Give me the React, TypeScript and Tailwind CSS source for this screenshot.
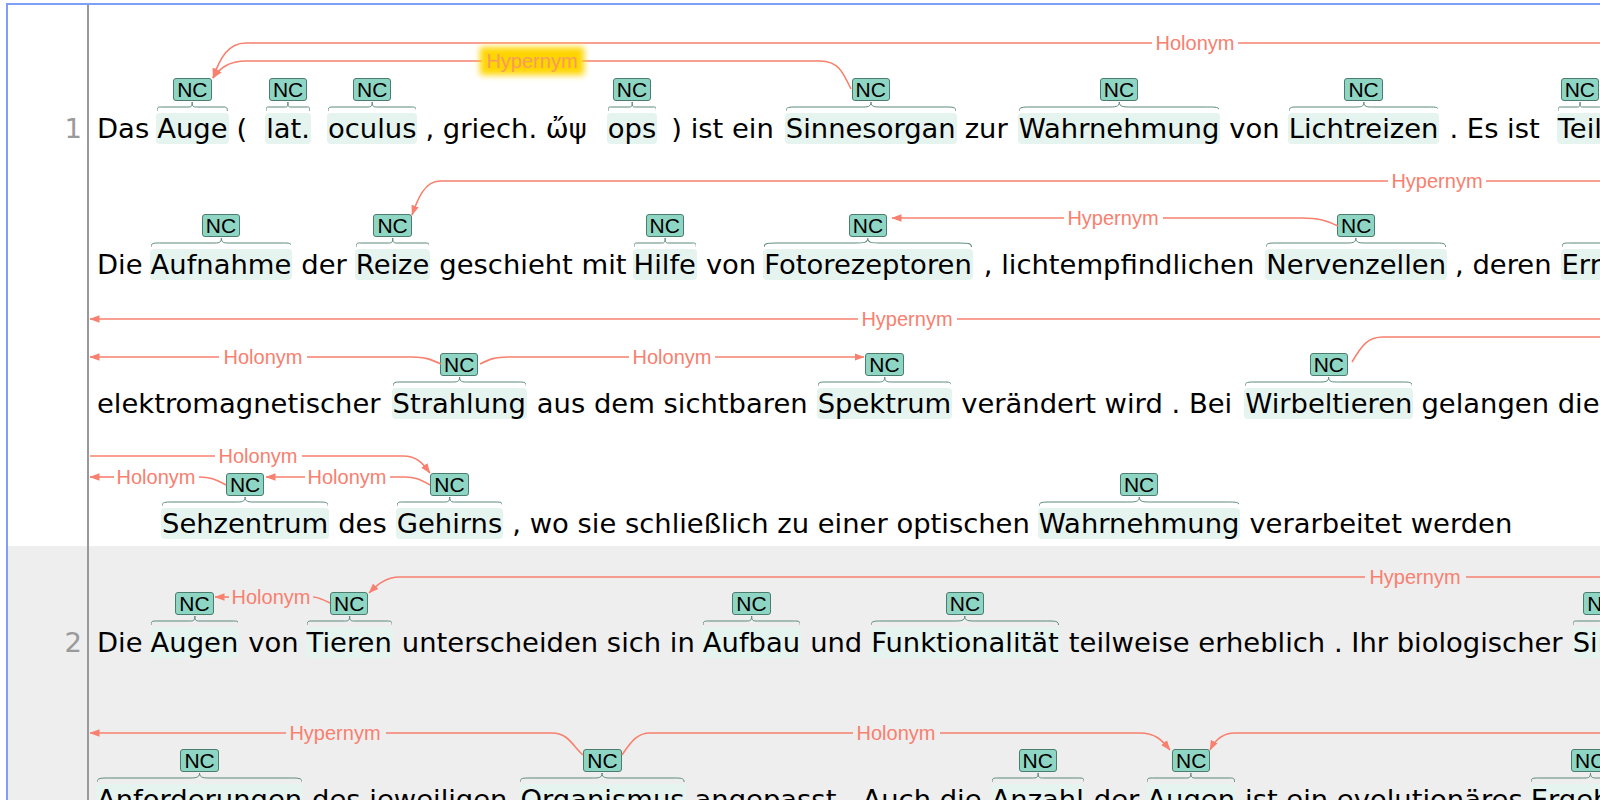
import React from "react";

type Seg = { t: string; nc?: boolean; ml?: string };
type Row = { h: string; num?: string; segs: Seg[] };
type Sentence = { bg: string; rows: Row[] };

const ARC = "#f8806f";

const sentences: Sentence[] = [
  {
    bg: "bg-white",
    rows: [
      {
        h: "h-[146px]",
        num: "1",
        segs: [
          { t: "Das" },
          { t: "Auge", nc: true, ml: "ml-[8px]" },
          { t: "(", ml: "ml-[9px]" },
          { t: "lat.", nc: true, ml: "ml-[19px]" },
          { t: "oculus", nc: true, ml: "ml-[18px]" },
          { t: ", griech. ὤψ", ml: "ml-[9px]" },
          { t: "ops", nc: true, ml: "ml-[21px]" },
          { t: ") ist ein", ml: "ml-[15px]" },
          { t: "Sinnesorgan", nc: true, ml: "ml-[12px]" },
          { t: "zur", ml: "ml-[9px]" },
          { t: "Wahrnehmung", nc: true, ml: "ml-[11px]" },
          { t: "von", ml: "ml-[10px]" },
          { t: "Lichtreizen", nc: true, ml: "ml-[9px]" },
          { t: ". Es ist", ml: "ml-[11px]" },
          { t: "Teil", nc: true, ml: "ml-[18px]" },
          { t: "des visuellen Systems", ml: "ml-[9px]" },
        ],
      },
      {
        h: "h-[136px]",
        segs: [
          { t: "Die" },
          { t: "Aufnahme", nc: true, ml: "ml-[8px]" },
          { t: "der", ml: "ml-[10px]" },
          { t: "Reize", nc: true, ml: "ml-[9px]" },
          { t: "geschieht mit", ml: "ml-[10px]" },
          { t: "Hilfe", nc: true, ml: "ml-[7px]" },
          { t: "von", ml: "ml-[10px]" },
          { t: "Fotorezeptoren", nc: true, ml: "ml-[8px]" },
          { t: ", lichtempfindlichen", ml: "ml-[12px]" },
          { t: "Nervenzellen", nc: true, ml: "ml-[12px]" },
          { t: ", deren", ml: "ml-[9px]" },
          { t: "Erregung", nc: true, ml: "ml-[10px]" },
          { t: "durch", ml: "ml-[9px]" },
        ],
      },
      {
        h: "h-[139px]",
        segs: [
          { t: "elektromagnetischer" },
          { t: "Strahlung", nc: true, ml: "ml-[12px]" },
          { t: "aus dem sichtbaren", ml: "ml-[11px]" },
          { t: "Spektrum", nc: true, ml: "ml-[10px]" },
          { t: "verändert wird . Bei", ml: "ml-[10px]" },
          { t: "Wirbeltieren", nc: true, ml: "ml-[13px]" },
          { t: "gelangen die Reize", ml: "ml-[9px]" },
        ],
      },
      {
        h: "h-[120px]",
        segs: [
          { t: "Sehzentrum", nc: true, ml: "ml-[65px]" },
          { t: "des", ml: "ml-[10px]" },
          { t: "Gehirns", nc: true, ml: "ml-[10px]" },
          { t: ", wo sie schließlich zu einer optischen", ml: "ml-[10px]" },
          { t: "Wahrnehmung", nc: true, ml: "ml-[9px]" },
          { t: "verarbeitet werden", ml: "ml-[10px]" },
        ],
      },
    ],
  },
  {
    bg: "bg-[#eeeeee]",
    rows: [
      {
        h: "h-[119px]",
        num: "2",
        segs: [
          { t: "Die" },
          { t: "Augen", nc: true, ml: "ml-[8px]" },
          { t: "von", ml: "ml-[10px]" },
          { t: "Tieren", nc: true, ml: "ml-[8px]" },
          { t: "unterscheiden sich in", ml: "ml-[10px]" },
          { t: "Aufbau", nc: true, ml: "ml-[8px]" },
          { t: "und", ml: "ml-[10px]" },
          { t: "Funktionalität", nc: true, ml: "ml-[9px]" },
          { t: "teilweise erheblich . Ihr biologischer", ml: "ml-[10px]" },
          { t: "Sinn", nc: true, ml: "ml-[10px]" },
        ],
      },
      {
        h: "h-[157px]",
        segs: [
          { t: "Anforderungen", nc: true },
          { t: "des jeweiligen", ml: "ml-[10px]" },
          { t: "Organismus", nc: true, ml: "ml-[13px]" },
          { t: "angepasst . Auch die", ml: "ml-[10px]" },
          { t: "Anzahl", nc: true, ml: "ml-[10px]" },
          { t: "der", ml: "ml-[10px]" },
          { t: "Augen", nc: true, ml: "ml-[8px]" },
          { t: "ist ein evolutionäres", ml: "ml-[10px]" },
          { t: "Ergebnis", nc: true, ml: "ml-[8px]" },
        ],
      },
    ],
  },
];

// arcs: line pieces (arrow = marker at end) and labels, page coordinates
type Piece = { d: string; arrow?: boolean };
type Label = { x: number; y: number; text: string; glow?: boolean };

const pieces: Piece[] = [
  // line 1
  { d: "M 1600 43 L 1238 43" },
  { d: "M 1152 43 L 246 43 C 228 43 220 58 213 78", arrow: true },
  { d: "M 851 89 C 843 72 838 61 820 61 L 582 61" },
  { d: "M 482 61 L 246 61 C 229 61 220 68 213 78", arrow: true },
  // line 2
  { d: "M 1600 181 L 1486 181" },
  { d: "M 1388 181 L 440 181 C 425 181 418 198 412 215", arrow: true },
  { d: "M 1338 226 C 1325 220 1318 218 1302 218 L 1163 218" },
  { d: "M 1064 218 L 892 218", arrow: true },
  // line 3
  { d: "M 1600 319 L 957 319" },
  { d: "M 858 319 L 90 319", arrow: true },
  { d: "M 441 364 C 430 359 425 357 412 357 L 307 357" },
  { d: "M 219 357 L 90 357", arrow: true },
  { d: "M 480 364 C 490 359 495 357 508 357 L 629 357" },
  { d: "M 715 357 L 864 357", arrow: true },
  { d: "M 1352 362 C 1362 345 1368 337 1383 337 L 1600 337" },
  // line 4
  { d: "M 90 456 L 215 456" },
  { d: "M 302 456 L 403 456 C 418 456 424 465 430 473", arrow: true },
  { d: "M 226 485 C 215 479 210 477 199 477" },
  { d: "M 114 477 L 90 477", arrow: true },
  { d: "M 430 485 C 420 479 414 477 405 477 L 390 477" },
  { d: "M 305 477 L 266 477", arrow: true },
  // line 5
  { d: "M 1600 577 L 1466 577" },
  { d: "M 1365 577 L 400 577 C 385 577 376 586 369 593", arrow: true },
  { d: "M 330 603 C 322 599 318 597 313 597" },
  { d: "M 229 597 L 215 597", arrow: true },
  // line 6
  { d: "M 583 755 C 572 745 568 733 552 733 L 386 733" },
  { d: "M 286 733 L 90 733", arrow: true },
  { d: "M 622 755 C 632 740 638 733 650 733 L 853 733" },
  { d: "M 940 733 L 1140 733 C 1155 733 1162 740 1170 750", arrow: true },
  { d: "M 1600 733 L 1235 733 C 1222 733 1215 740 1210 750", arrow: true },
];

const labels: Label[] = [
  { x: 1195, y: 43, text: "Holonym" },
  { x: 532, y: 61, text: "Hypernym", glow: true },
  { x: 1437, y: 181, text: "Hypernym" },
  { x: 1113, y: 218, text: "Hypernym" },
  { x: 907, y: 319, text: "Hypernym" },
  { x: 263, y: 357, text: "Holonym" },
  { x: 672, y: 357, text: "Holonym" },
  { x: 258, y: 456, text: "Holonym" },
  { x: 156, y: 477, text: "Holonym" },
  { x: 347, y: 477, text: "Holonym" },
  { x: 1415, y: 577, text: "Hypernym" },
  { x: 271, y: 597, text: "Holonym" },
  { x: 335, y: 733, text: "Hypernym" },
  { x: 896, y: 733, text: "Holonym" },
];

const Token = ({ seg }: { seg: Seg }) => {
  if (!seg.nc) {
    return (
      <span className={`shrink-0 whitespace-pre h-[31px] leading-[31px] ${seg.ml ?? ""}`}>
        {seg.t}
      </span>
    );
  }
  return (
    <div className={`shrink-0 flex flex-col items-center ${seg.ml ?? ""}`}>
      <div className="h-[23px] px-[3px] border border-[#4b7d6e] bg-[#8fd5c3] rounded-[3px] text-[21px] leading-[21px] text-black font-['Liberation_Sans',Arial,sans-serif]">
        NC
      </div>
      {/* curly brace over the span */}
      <div className="relative w-full h-[12px]">
        <svg className="absolute inset-0 w-full h-full" viewBox="0 0 100 12" preserveAspectRatio="none">
          <path
            d="M0 10 C0 6 2 6 6 6 L44 6 C48 6 50 6 50 1 C50 6 52 6 56 6 L94 6 C98 6 100 6 100 10"
            fill="none"
            stroke="#5a887d"
            strokeWidth="1"
            vectorEffect="non-scaling-stroke"
          />
        </svg>
      </div>
      <span className="whitespace-pre h-[31px] leading-[31px] px-[1px] -mx-[1px] rounded-[4px] bg-[#e6f4f0]">
        {seg.t}
      </span>
    </div>
  );
};

const Arcs = () => (
  <svg className="absolute left-0 top-0 pointer-events-none" width="1600" height="800">
    <defs>
      <marker
        id="ah"
        markerUnits="userSpaceOnUse"
        markerWidth="10"
        markerHeight="10"
        refX="9.5"
        refY="5"
        orient="auto"
        viewBox="0 0 10 10"
      >
        <path d="M0,1.2 L10,5 L0,8.8 z" fill={ARC} />
      </marker>
      <filter id="glow" x="-20%" y="-40%" width="140%" height="180%">
        <feGaussianBlur stdDeviation="3" />
      </filter>
    </defs>
    {pieces.map((p, i) => (
      <path
        key={i}
        d={p.d}
        fill="none"
        stroke={ARC}
        strokeWidth="1.6"
        markerEnd={p.arrow ? "url(#ah)" : undefined}
      />
    ))}
    {labels.map((l, i) => (
      <g key={i}>
        {l.glow && (
          <rect x={l.x - 52} y={l.y - 14} width="104" height="28" fill="#ffd500" filter="url(#glow)" />
        )}
        <text
          x={l.x}
          y={l.y + 7}
          textAnchor="middle"
          fontSize="20"
          fontFamily="'Liberation Sans', Arial, sans-serif"
          fill={l.glow ? "#f99a5c" : ARC}
        >
          {l.text}
        </text>
      </g>
    ))}
  </svg>
);

export default function App() {
  return (
    <div className="relative w-[1600px] h-[800px] overflow-hidden bg-white text-black font-['DejaVu_Sans',Verdana,sans-serif] text-[27.4px]">
      <div className="ml-[6px] mt-[3px] border-l-2 border-t-2 border-[#7f9ff6]">
        {sentences.map((s, si) => (
          <div key={si} className={s.bg}>
            {s.rows.map((r, ri) => (
              <div key={ri} className={`flex ${r.h}`}>
                <div className="w-[79px] shrink-0 flex items-end justify-end pr-[5px] pb-[7px]">
                  <span className="h-[31px] leading-[31px] text-[#9a9a9a]">{r.num ?? ""}</span>
                </div>
                <div className="flex-1 min-w-0 overflow-hidden border-l-2 border-[#999999] flex items-end pl-[8px] pb-[7px]">
                  {r.segs.map((seg, k) => (
                    <Token key={k} seg={seg} />
                  ))}
                </div>
              </div>
            ))}
          </div>
        ))}
      </div>
      <Arcs />
    </div>
  );
}
